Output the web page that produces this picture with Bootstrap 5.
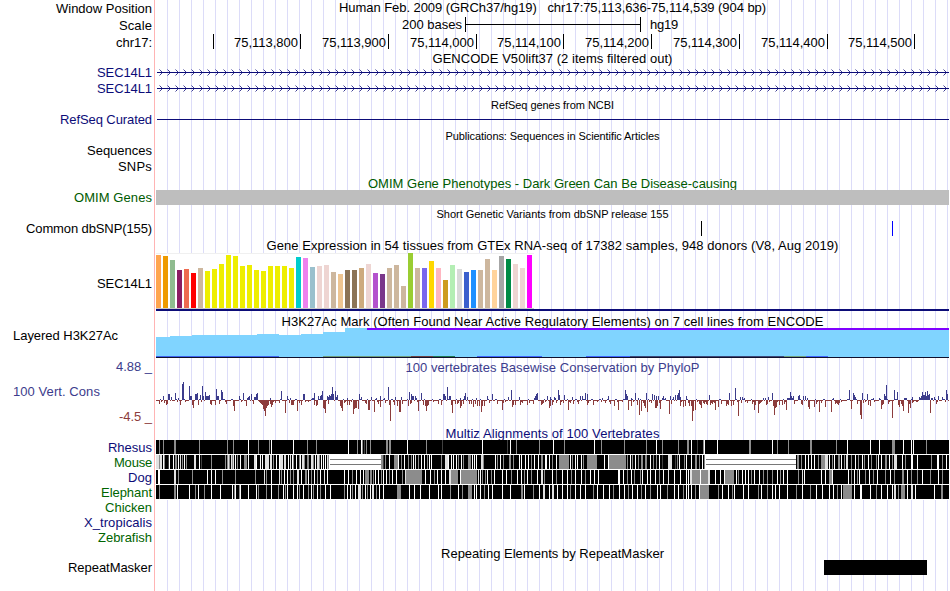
<!DOCTYPE html>
<html lang="en">
<head>
  <meta charset="UTF-8" />
  <meta name="viewport" content="width=device-width, initial-scale=1" />
  <title>hg19 chr17:75,113,636-75,114,539</title>
  <link href="https://cdn.jsdelivr.net/npm/bootstrap@5.3.0/dist/css/bootstrap.min.css" rel="stylesheet" />
  <style>
    body {
      font-family: "Liberation Sans", Arial, sans-serif;
      font-size: 13px;
      line-height: 15px;
      color: #000;
      background: #fff;
    }
    .browser {
      width: 949px;
      height: 591px;
      background:
        linear-gradient(#ffb4b4, #ffb4b4) 154px 0 / 1px 100% no-repeat,
        repeating-linear-gradient(90deg, #dcdcf8 0 1px, transparent 1px 12px) 167px 0 / 782px 100% no-repeat;
    }
    .side { width: 155px; padding-right: 3px; flex: none; text-align: right; white-space: nowrap; }
    .lane { width: 794px; flex: none; white-space: nowrap; }
    .lane.text-center { padding-left: 1px; }
    .lane svg { display: block; }
    .fine { font-size: 11px; }
    .h14 { height: 14px; }
    .h15 { height: 15px; }
    .h16 { height: 16px; }
    .h17 { height: 17px; }
    .h30 { height: 30px; }
    .h51 { height: 51px; }
    .h58 { height: 58px; }
    .down1 { padding-top: 1px; }
    .down2 { padding-top: 2px; }
    .down3 { padding-top: 3px; }
    .navy { color: #0c0c78; }
    .forest { color: #006400; }
    .omim { color: #005a00; }
    .slate { color: #3c3c8c; }
    .brick { color: #8c3c3c; }
    .scalebar { width: 176px; height: 15px; border: solid #000; border-width: 0 1px; margin: 0 9px 0 3px; }
    .scalebar::before { content: ""; display: block; height: 8px; border-bottom: 1px solid #000; }
    .scale-lane { padding-left: 247px; }
    .tick { height: 15px; border-right: 1px solid #000; padding: 1px 2px 0 0; text-align: right; }
    .exp-label { padding-top: 23px; }
    .indent { padding-left: 13px; }
    .cons-name { margin-top: 9px; }
    .cons-low { margin-top: 10px; }
  </style>
</head>
<body>

<div class="browser overflow-hidden">
  <div class="d-flex h17">
    <div class="side down1"><span data-w="96">Window Position</span></div>
    <div class="lane text-center"><span data-w="427">Human Feb. 2009 (GRCh37/hg19) &nbsp; chr17:75,113,636-75,114,539 (904 bp)</span></div>
  </div>
  <div class="d-flex h17">
    <div class="side down1"><span data-w="33">Scale</span></div>
    <div class="lane scale-lane d-flex">
      <span data-w="60">200 bases</span>
      <div class="scalebar"></div>
      <span data-w="28">hg19</span>
    </div>
  </div>
  <div class="d-flex h17">
    <div class="side down1"><span data-w="36">chr17:</span></div>
    <div class="lane d-flex" id="ruler"></div>
  </div>

  <!-- genes -->
  <div class="d-flex h14">
    <div class="side"></div>
    <div class="lane text-center"><span data-w="240">GENCODE V50lift37 (2 items filtered out)</span></div>
  </div>
  <div class="d-flex h16">
    <div class="side navy"><span data-w="55">SEC14L1</span></div>
    <div class="lane"><svg class="intron" width="794" height="16" viewBox="155 65 794 16"></svg></div>
  </div>
  <div class="d-flex h16">
    <div class="side navy"><span data-w="55">SEC14L1</span></div>
    <div class="lane"><svg class="intron" width="794" height="16" viewBox="155 65 794 16"></svg></div>
  </div>
  <div class="d-flex h15">
    <div class="side"></div>
    <div class="lane text-center fine down1"><span data-w="123">RefSeq genes from NCBI</span></div>
  </div>
  <div class="d-flex h15">
    <div class="side navy"><span data-w="92">RefSeq Curated</span></div>
    <div class="lane"><svg width="794" height="15" viewBox="155 112 794 15"><rect x="157" y="119" width="792" height="1" fill="#0c0c78" /></svg></div>
  </div>

  <!-- publications -->
  <div class="d-flex h16">
    <div class="side"></div>
    <div class="lane text-center fine down2"><span data-w="214">Publications: Sequences in Scientific Articles</span></div>
  </div>
  <div class="d-flex h16"><div class="side"><span data-w="65">Sequences</span></div></div>
  <div class="d-flex h17"><div class="side"><span data-w="34">SNPs</span></div></div>

  <!-- OMIM and dbSNP -->
  <div class="d-flex h14">
    <div class="side"></div>
    <div class="lane text-center omim"><span data-w="369">OMIM Gene Phenotypes - Dark Green Can Be Disease-causing</span></div>
  </div>
  <div class="d-flex h15">
    <div class="side omim"><span data-w="78">OMIM Genes</span></div>
    <div class="lane"><svg width="794" height="15" viewBox="155 190 794 15"><rect x="156" y="190" width="793" height="15" fill="#bebebe" /></svg></div>
  </div>
  <div class="d-flex h16">
    <div class="side"></div>
    <div class="lane text-center fine down2"><span data-w="232">Short Genetic Variants from dbSNP release 155</span></div>
  </div>
  <div class="d-flex h17">
    <div class="side"><span data-w="126">Common dbSNP(155)</span></div>
    <div class="lane">
      <svg width="794" height="17" viewBox="155 221 794 17">
        <rect x="701" y="221" width="1" height="15" fill="#000" />
        <rect x="892" y="221" width="1" height="15" fill="#00f" />
      </svg>
    </div>
  </div>

  <!-- GTEx -->
  <div class="d-flex h15">
    <div class="side"></div>
    <div class="lane text-center"><span data-w="572">Gene Expression in 54 tissues from GTEx RNA-seq of 17382 samples, 948 donors (V8, Aug 2019)</span></div>
  </div>
  <div class="d-flex h58">
    <div class="side exp-label"><span data-w="55">SEC14L1</span></div>
    <div class="lane"><svg id="gtex" width="794" height="58" viewBox="155 253 794 58"></svg></div>
  </div>

  <!-- H3K27Ac -->
  <div class="d-flex h17">
    <div class="side"></div>
    <div class="lane text-center down3"><span data-w="542">H3K27Ac Mark (Often Found Near Active Regulatory Elements) on 7 cell lines from ENCODE</span></div>
  </div>
  <div class="d-flex h30">
    <div class="side text-start indent"><span data-w="105">Layered H3K27Ac</span></div>
    <div class="lane">
      <svg id="h3k" width="794" height="30" viewBox="155 328 794 30">
        <path d="M156 337H170V336H192V335H257V334H279V335H301V334H323V332H345V328H949V357H156Z" fill="#80d4ff" />
        <rect x="367" y="328" width="582" height="2" fill="#8000ff" />
        <rect x="156" y="357" width="793" height="1" fill="#10102c" />
      </svg>
    </div>
  </div>

  <!-- conservation -->
  <div class="d-flex h17">
    <div class="side down1 slate"><span data-w="36">4.88 _</span></div>
    <div class="lane text-center down2 slate"><span data-w="294">100 vertebrates Basewise Conservation by PhyloP</span></div>
  </div>
  <div class="d-flex h51">
    <div class="side d-flex flex-column">
      <div class="text-start indent cons-name slate"><span data-w="87">100 Vert. Cons</span></div>
      <div class="cons-low brick"><span data-w="33">-4.5 _</span></div>
    </div>
    <div class="lane"><svg id="phylop" width="794" height="51" viewBox="155 375 794 51"></svg></div>
  </div>
  <div class="d-flex h14">
    <div class="side"></div>
    <div class="lane text-center navy"><span data-w="214">Multiz Alignments of 100 Vertebrates</span></div>
  </div>
  <div id="multiz"></div>

  <!-- repeats -->
  <div class="d-flex h15">
    <div class="side"></div>
    <div class="lane text-center down1"><span data-w="223">Repeating Elements by RepeatMasker</span></div>
  </div>
  <div class="d-flex h15">
    <div class="side"><span data-w="84">RepeatMasker</span></div>
    <div class="lane"><svg width="794" height="15" viewBox="155 560 794 15"><rect x="824" y="560" width="103" height="15" fill="#000" /></svg></div>
  </div>
</div>

<script src="https://cdn.jsdelivr.net/npm/bootstrap@5.3.0/dist/js/bootstrap.bundle.min.js"></script>
<script>
const rect = (x, y, w, h, fill) => `<rect x="${x}" y="${y}" width="${w}" height="${h}" fill="${fill}"/>`;

// ruler: right edge of each tick and its label
const ticks = [[214, ''], [301, '75,113,800'], [389, '75,113,900'], [477, '75,114,000'], [564, '75,114,100'],
  [652, '75,114,200'], [740, '75,114,300'], [828, '75,114,400'], [915, '75,114,500']];
let last = 155;
document.getElementById('ruler').innerHTML = ticks.map(([x, label]) => {
  const cell = `<div class="tick" style="width:${x - last}px"><span${label ? ' data-w="64"' : ''}>${label}</span></div>`;
  last = x;
  return cell;
}).join('');

// introns with strand arrows every 8 pixels
let arrows = rect(157, 72, 792, 1, '#0c0c78');
for (let x = 159; x < 947; x += 8) {
  arrows += `<path d="M${x + 0.5} 69.5l3 3l-3 3" fill="none" stroke="#0c0c78" stroke-width="0.8"/>`;
}
document.querySelectorAll('.intron').forEach(el => { el.innerHTML = arrows; });

// GTEx bars
const tan = '#cdb79e', rose = '#eed5d2', yellow = '#eeee00';
const tissueColors = ['#ffa54f', '#ee9a00', '#8fbc8f', '#8b1c62', '#ee6a50', '#ff0000', tan,
  ...Array(13).fill(yellow), '#00cdcd', '#ee82ee', '#9ac0cd', rose, rose, tan, '#eec591', '#8b7355', '#8b7355',
  '#cdaa7d', rose, '#b452cd', '#7a378b', tan, tan, tan, '#9acd32', tan, '#7a67ee', '#ffd700', '#ffb6c1',
  '#cd9b1d', '#b4eeb4', '#d9d9d9', '#3a5fcd', '#1e90ff', tan, tan, '#ffd39b', '#a6a6a6', '#008b45', rose, rose, '#ff00ff'];
const tissueHeights = [53, 52, 48, 38, 39, 35, 40, 37, 39, 44, 53, 52, 42, 43, 38, 37, 42, 42, 42, 40, 51, 50, 41, 42,
  43, 36, 34, 38, 38, 40, 44, 35, 34, 40, 43, 22, 55, 40, 40, 47, 40, 28, 43, 39, 36, 38, 38, 49, 38, 52, 49, 44, 40, 53];
let gtex = rect(156, 253, 378, 56, '#fff') + rect(156, 253, 378, 1, '#f0f0f0') + rect(156, 308, 378, 1, '#c8c8c8');
tissueHeights.forEach((h, i) => { gtex += rect(156 + i * 7, 308 - h, 5, h, tissueColors[i]); });
gtex += rect(156, 309, 793, 2, '#0c0c78');
document.getElementById('gtex').innerHTML = gtex;

// low signal of the other cell lines, along the base of the H3K27Ac area
const base = [[156, 279, '#3c64f0'], [323, 411, '#6e9c78'], [411, 433, '#6e4040'], [433, 455, '#1e7850'],
  [477, 542, '#3c64ff'], [586, 630, '#3c64ff'], [630, 784, '#3c4878'], [784, 806, '#70a078'], [806, 828, '#3c64ff']];
document.getElementById('h3k').innerHTML += base.map(([a, b, c]) => rect(a, 356, b - a, 1, c)).join('');

// PhyloP scores, position:height
const up = `163:4 168:6 169:6 171:3 175:7 178:2 182:16 183:18 189:14 190:4 191:4 195:6 196:6 197:7 200:5 202:14 203:4
205:8 206:4 207:4 208:4 209:5 216:11 217:4 218:4 221:10 222:8 239:4 243:7 247:2 248:3 249:4 251:6 254:3 255:3 256:6 257:7
270:2 281:9 287:4 290:2 303:6 304:6 312:2 313:2 314:7 318:4 320:4 321:5 322:9 327:4 328:3 329:5 330:4 331:6 332:13 333:6
335:9 336:3 337:5 347:2 359:6 361:3 371:3 376:2 380:4 384:2 388:13 395:3 401:3 409:8 411:6 412:4 413:4 415:4 416:2
421:7 443:6 444:6 445:4 447:13 449:4 450:4 460:2 463:1 464:4 465:7 467:3 476:2 487:4 492:6 508:3 511:10 519:3 534:2 535:4 536:6
537:7 547:4 550:3 554:3 555:2 558:10 559:5 564:5 572:3 580:4 582:4 585:7 587:6 602:2 608:4 625:10 626:6 627:4 631:2 635:7
638:2 646:7 652:6 654:5 656:4 658:4 662:2 663:4 665:2 670:4 673:3 675:5 677:5 678:7 679:10 680:3 686:4 709:5 729:7 735:12
740:3 742:3 744:2 763:2 765:2 768:3 772:7 787:2 788:2 789:2 790:8 791:4 792:2 793:4 798:4 799:5 803:4 805:4 807:2 833:2 849:10
853:7 854:5 855:3 862:7 867:6 873:2 879:2 884:6 885:4 886:15 894:10 897:8 904:2 905:2 906:2 912:3 919:3 920:2 921:4 922:8
923:5 924:5 925:8 926:4 927:9 928:5 929:6 931:2 932:2 934:3 938:4 942:3 946:10 947:6`;
const down = `159:4 164:3 166:5 167:4 180:5 192:5 193:8 198:5 210:4 211:5 215:5 219:4 226:4 233:6 234:11 246:6 253:4 259:2 260:3
261:4 262:5 263:9 264:11 265:16 266:8 267:6 268:5 270:4 271:7 272:5 275:3 279:3 285:13 289:3 291:5 292:5 293:5 297:11 299:3
301:5 308:2 314:5 316:6 317:5 323:8 324:9 325:13 328:4 340:6 341:8 342:11 344:3 347:5 349:5 351:2 353:14 354:9 355:8 356:8
358:9 365:3 366:4 368:10 369:10 374:12 378:4 380:7 385:3 389:5 390:21 394:5 397:6 399:12 400:12 402:4 408:6 410:4 411:3
418:11 423:5 425:6 426:11 427:6 428:5 431:1 438:4 441:5 451:5 452:13 455:4 457:4 458:3 460:8 461:6 463:4 469:4 471:4 473:7
475:4 477:6 479:6 481:12 482:6 484:6 489:3 497:4 502:10 503:3 512:7 513:5 515:5 520:5 522:3 527:5 529:3 533:4 541:5 542:4
543:3 549:8 550:6 552:5 556:3 560:5 563:3 568:10 570:3 573:4 578:4 587:5 588:3 593:5 597:2 605:3 610:4 614:6 618:10 622:2
628:10 631:6 637:5 639:15 641:11 643:3 644:6 645:8 647:12 651:3 655:8 656:8 657:6 659:3 660:9 669:14 671:4 680:6 683:7
685:6 688:3 689:6 691:6 692:21 693:11 695:10 699:4 700:5 701:8 703:3 704:4 706:4 707:5 710:5 711:3 712:4 714:3 715:10 718:7
721:4 726:6 727:4 728:5 731:6 733:5 738:16 741:3 747:3 752:4 754:10 755:5 758:13 759:4 760:3 761:2 766:5 767:4 773:6 774:15
775:8 776:7 779:5 782:5 784:4 786:10 794:4 797:1 801:4 802:5 808:7 809:9 814:7 816:4 819:12 821:3 825:7 831:12 835:4 836:3
837:4 838:5 839:3 851:9 857:4 860:15 861:19 863:3 868:5 870:6 874:2 881:9 882:5 883:4 888:4 892:18 898:5 899:7 901:4 902:6
903:11 908:13 909:4 910:8 912:3 916:2 917:2 930:13 936:4`;
const parse = s => new Map(s.trim().split(/\s+/).map(p => p.split(':').map(Number)));
const ups = parse(up), downs = parse(down);
let cons = '';
for (let x = 156; x < 949; x++) {
  const u = ups.get(x), d = downs.get(x);
  if (u) cons += rect(x, 400 - u, 1, u, '#3c3c8c');
  if (d) cons += rect(x, 400, 1, d, '#8c3c3c');
  if (u || d) continue;
  // near zero scores
  const r = (x * 7919 + (x >> 2) * 104729) % 10;
  if (r < 3) cons += rect(x, 399, 1, 1, '#3c3c8c');
  else cons += rect(x, 400, 1, r > 8 ? 2 : 1, '#8c3c3c');
}
document.getElementById('phylop').innerHTML = cons;

// alignments: position, shade, optional width
const shades = { g: '#8c8c8c', l: '#e1e1e1', w: '#fff', d: '#404040' };
const species = [
  ['Rhesus', 'navy', 44, `159g 163g 174g2 199g 227g 233g 248w 258g 269g 271w 293w 307g 316g 348w 357g 361w 362g 364d 366g
370g 386g2 389g2 407w 426g 442d 482w 507d 510w 516g 539g 553w 564g 594w 601g 624g 646g 656w 662g 678g 687g 688g 691w 697d
703g 704w 717w 749g2 772w 777g 788g 810g2 836g 847w 870w 879w 892g3 903w 911w 913w 926g`],
  ['Mouse', 'forest', 38, `156l3 159g 160l2 163w 164g 168d 169w 173w 175g2 178w 180l 182g 184w 186g 194l2 199w 201d 211g
225g 227g 228l 229g 231l 232g 233l 235w 237g 240w 244g 245g2 248w 254l2 256w 260w 262w 265l4 270l2 273g 276w 279w 280l3 284l2
288w 290l 292w 293g 296w 299g 300w 302l2 304g 307g2 311l2 313g 315w 317l2 319g 321w 323w 325w 327l 328g 381g2 383d 385g 389w
394g4 398w 401g 404w 408g 411g 413w 415l 418g 421w 424w 427g 429w 431w 441g 445l3 448w 451w 453w 456w 458g 461w 463g 468g3
472w 474w 476w 481l2 483g 495w 497g 500w 503g 509g2 513g 519w 521w 525w 528w 531g 534w 538w 541g2 545w2 549w 552g 556w
559g10 570w 572g 575w 577w 581w 583g 587g10 604w 608w 609g17 627g 630w 632g 635w 638g 641g2 645g2 650w 653g 656g 659w 662d
668l4 675d 677g 679w 684g 686w 691w 695g2 699g 702w 704g 797g2 801g 805w 808w 811w 814w 818g 821g4 825l3 829w 832g 834w 838g2
841w 844g 846l2 851g 855w 858g 862w 864g 868w 871g 876g 878w 881w 885g2 889w 892g 894l3 902w 905g 911w2 917w 931g 937w2 942g 946w`],
  ['Dog', 'navy', 24, `158w2 174l2 178g 192g 207w 211w 215w 222g 235g 255g 264l 266g 271w 279l 281g 284w 287w 290g 293g 297l2
301w 305g2 308w 311g 314w 317g 320w 324l 327w 344w 348w 352g 356w 360w 363w 365g4 370g2 373g 375w 378w 381g 383w 386w 389g 392w
396w 402g 405l 406g14 420g2 425w 430w 434g 437w 441w 445w 449l2 451g7 460w 461g16 478l 480w 482g 485g 487w 491g 494w 502w 506w
511g 517w 521w 524g 527w 531g 537w 541l2 544g 552w 556g 562w 567w 571g 575w 581w 585g 590w 594w 598w 618w2 623w 627g 631w
634g 640g 642w 647w 650w 655w 659g 663w 668l 674w 680w 686w 688w 690l2 692g8 700w 701g7 708l2 715w 720w 724w 725g9 736w 738g
742w 745w 748w 751g 754w 759w 763g 767g 772g 777w 780g 783w 787w 798g 802l 804w 821w 825w 829g3 832w 848w 851g 854w 857g 859w
865g 869w 873g 877w 885g 890w 894g 902g2 907w 911g 917g 922w 930g 938w 942g`],
  ['Elephant', 'forest', 51, `159g 174g2 177w 189w 195g 198w 204g 211w 220w 232w 234g 235w 239g 240w 248w 256w 258g 266g 271w
278g 283w 285g 287w 293w 297w 299g 303w 308g 311w 313g 317w 320g 325w 330w 344g 347w 350w 352g 355w 358l3 362g 365w 367g 370w
372l2 376g 379w 383w 397g4 409w 414w 420w 429w 438w 441w 450g 458w 462g 468g4 474w 476w 480w 484g 488w 492w 502w 510w 521g2
524w 533g 539w 543l2 549w 552l2 557w 562w 567w 570g 575w 580w 585w 593g 597w 603w 609w 613g 619w 624w 628g 632w 637w 641g
645w 650g 657w 660w 667g 674w 678w 683g 686w 688w 691w 695g 699w 700g9 718g 722w 728w 732g 734w 743w 748w 758g 761w 767g
772w 775w 779w 787w 796g 802w 810g 816w 822w 829w 833w 837g 841w 843g9 854w 860w2 870w 876g 881w 887w 892w 894l2 898g 901g4
907w 911l2 915w 934w 941g2`],
  ['Chicken', 'forest', 47, ''],
  ['X_tropicalis', 'navy', 68, ''],
  ['Zebrafish', 'forest', 54, '']
];
const gaps = [[330, 51], [706, 90]];

function stripes(name, marks) {
  if (!marks) return '';
  let out = rect(156, 0, 793, 14, '#000');
  marks.trim().split(/\s+/).forEach(m => {
    const [, x, shade, w] = m.match(/(\d+)([glwd])(\d*)/);
    out += rect(x, 0, w || 1, 14, shades[shade]);
  });
  if (name === 'Mouse') {
    gaps.forEach(([x, w]) => {
      out += rect(x - 1, 0, w + 1, 14, '#fff') + rect(x, 4, w, 1, '#787878') + rect(x, 9, w, 1, '#787878');
    });
  }
  return `<rect x="156" y="0" width="793" height="15" fill="#fff"/>` + out;
}

document.getElementById('multiz').innerHTML = species.map(([name, color, w, marks]) => `
  <div class="d-flex h15">
    <div class="side ${color}"><span data-w="${w}">${name}</span></div>
    <div class="lane"><svg width="794" height="15" viewBox="155 0 794 15">${stripes(name, marks)}</svg></div>
  </div>`).join('');

// track the text out to its drawn width
document.querySelectorAll('[data-w]').forEach(el => {
  const gap = (el.dataset.w - el.getBoundingClientRect().width) / el.textContent.length;
  el.style.letterSpacing = gap.toFixed(3) + 'px';
});
</script>

</body>
</html>
